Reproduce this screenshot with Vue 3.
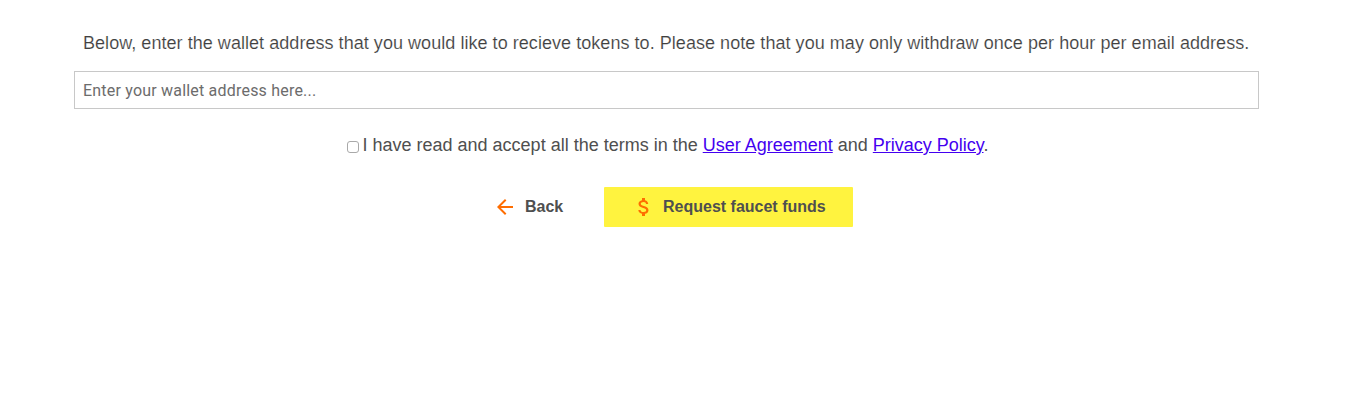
<script setup>
import { ref } from 'vue'

const wallet = ref('')
const accepted = ref(false)
</script>

<template>
  <main class="faucet">
    <p class="intro">Below, enter the wallet address that you would like to recieve tokens to. Please note that you may only withdraw once per hour per email address.</p>
    <input v-model="wallet" class="wallet" type="text" placeholder="Enter your wallet address here..." />
    <div class="terms">
      <input v-model="accepted" class="check" type="checkbox" aria-label="Accept terms" />
      <span>I have read and accept all the terms in the <a href="#">User Agreement</a> and <a href="#">Privacy Policy</a>.</span>
    </div>
    <div class="actions">
      <button class="btn back" type="button">
        <svg width="24" height="24" viewBox="0 0 24 24" fill="#ff6d00"><path d="M20 11H7.83l5.59-5.59L12 4l-8 8 8 8 1.41-1.41L7.83 13H20v-2z" /></svg>
        <span>Back</span>
      </button>
      <button class="btn request" type="button">
        <svg width="24" height="24" viewBox="0 0 24 24" fill="#ff6d00"><path d="M11.8 10.9c-2.27-.59-3-1.2-3-2.15 0-1.09 1.01-1.85 2.7-1.85 1.78 0 2.44.85 2.5 2.1h2.21c-.07-1.72-1.12-3.3-3.21-3.81V3h-3v2.16c-1.94.42-3.5 1.68-3.5 3.61 0 2.31 1.91 3.46 4.7 4.13 2.5.6 3 1.48 3 2.41 0 .69-.49 1.79-2.7 1.79-2.06 0-2.87-.92-2.98-2.1h-2.2c.12 2.19 1.76 3.42 3.68 3.83V21h3v-2.15c1.95-.37 3.5-1.5 3.5-3.55 0-2.84-2.43-3.81-4.7-4.4z" /></svg>
        <span>Request faucet funds</span>
      </button>
    </div>
  </main>
</template>

<style>
body {
  background: #fff;
}
</style>

<style scoped>
.faucet {
  box-sizing: border-box;
  height: 410px;
  padding: 31px 94px 0 74px;
  color: #4f4f4f;
  font-family: "Liberation Sans", Arial, sans-serif;
  font-size: 18px;
}
.intro {
  margin: 0 0 16px;
  padding-left: 9px;
  color: #404040;
  line-height: 24px;
  letter-spacing: 0.046px;
  white-space: nowrap;
  -webkit-text-stroke: 0.15px #fff;
}
.wallet {
  display: block;
  box-sizing: border-box;
  width: 100%;
  height: 38px;
  padding: 0 8px;
  border: 1px solid #c8c8c8;
  border-radius: 0;
  outline: none;
  font-family: Roboto, "Liberation Sans", sans-serif;
  font-size: 16px;
  letter-spacing: 0.2px;
}
.wallet::placeholder {
  color: #6c6c6c;
}
.terms {
  display: flex;
  align-items: center;
  margin-top: 24px;
  padding-left: 273px;
  line-height: 24px;
  white-space: nowrap;
}
.check {
  appearance: none;
  box-sizing: border-box;
  width: 12px;
  height: 12px;
  margin: 4px 3.5px 0 0;
  border: 1px solid #a9a9a9;
  border-radius: 3px;
  background: #fff;
}
.terms a {
  color: #4400f0;
  text-decoration: underline;
}
.actions {
  display: flex;
  margin: 30px 0 0 417px;
}
.btn {
  display: flex;
  align-items: center;
  box-sizing: border-box;
  height: 40px;
  padding: 0;
  border: 0;
  border-radius: 1px;
  background: transparent;
  color: #4f4f4f;
  font: bold 16px "Liberation Sans", Arial, sans-serif;
  white-space: nowrap;
}
.back {
  width: 113px;
}
.back svg {
  margin: 0 8px 0 2px;
}
.request {
  width: 249px;
  padding-left: 28px;
  background: #fff33f;
}
.request svg {
  margin-right: 7px;
}
</style>
